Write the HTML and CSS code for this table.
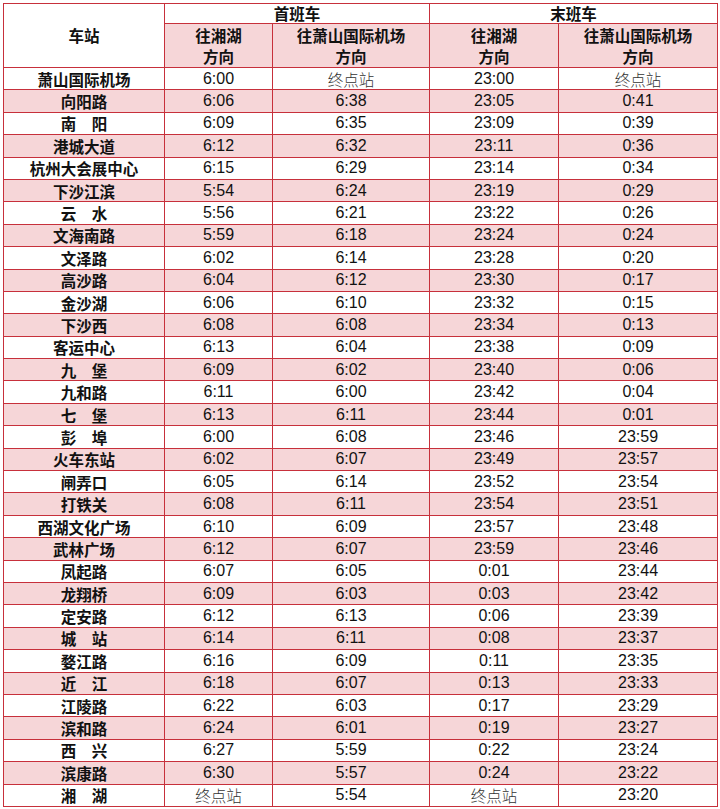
FILE: index.html
```html
<!DOCTYPE html>
<html lang="zh">
<head>
<meta charset="utf-8">
<link rel="stylesheet" href="styles.css">
</head>
<body>
<table class="tt">
<colgroup><col class="c1"><col class="c2"><col class="c3"><col class="c4"><col class="c5"></colgroup>
<thead>
<tr class="h1"><th rowspan="2" class="station-h">车站</th><th colspan="2">首班车</th><th colspan="2">末班车</th></tr>
<tr class="h2"><th>往湘湖<br>方向</th><th>往萧山国际机场<br>方向</th><th>往湘湖<br>方向</th><th>往萧山国际机场<br>方向</th></tr>
</thead>
<tbody>
<tr><th>萧山国际机场</th><td>6:00</td><td class="end">终点站</td><td>23:00</td><td class="end">终点站</td></tr>
<tr><th>向阳路</th><td>6:06</td><td>6:38</td><td>23:05</td><td>0:41</td></tr>
<tr><th>南　阳</th><td>6:09</td><td>6:35</td><td>23:09</td><td>0:39</td></tr>
<tr><th>港城大道</th><td>6:12</td><td>6:32</td><td>23:11</td><td>0:36</td></tr>
<tr><th>杭州大会展中心</th><td>6:15</td><td>6:29</td><td>23:14</td><td>0:34</td></tr>
<tr><th>下沙江滨</th><td>5:54</td><td>6:24</td><td>23:19</td><td>0:29</td></tr>
<tr><th>云　水</th><td>5:56</td><td>6:21</td><td>23:22</td><td>0:26</td></tr>
<tr><th>文海南路</th><td>5:59</td><td>6:18</td><td>23:24</td><td>0:24</td></tr>
<tr><th>文泽路</th><td>6:02</td><td>6:14</td><td>23:28</td><td>0:20</td></tr>
<tr><th>高沙路</th><td>6:04</td><td>6:12</td><td>23:30</td><td>0:17</td></tr>
<tr><th>金沙湖</th><td>6:06</td><td>6:10</td><td>23:32</td><td>0:15</td></tr>
<tr><th>下沙西</th><td>6:08</td><td>6:08</td><td>23:34</td><td>0:13</td></tr>
<tr><th>客运中心</th><td>6:13</td><td>6:04</td><td>23:38</td><td>0:09</td></tr>
<tr><th>九　堡</th><td>6:09</td><td>6:02</td><td>23:40</td><td>0:06</td></tr>
<tr><th>九和路</th><td>6:11</td><td>6:00</td><td>23:42</td><td>0:04</td></tr>
<tr><th>七　堡</th><td>6:13</td><td>6:11</td><td>23:44</td><td>0:01</td></tr>
<tr><th>彭　埠</th><td>6:00</td><td>6:08</td><td>23:46</td><td>23:59</td></tr>
<tr><th>火车东站</th><td>6:02</td><td>6:07</td><td>23:49</td><td>23:57</td></tr>
<tr><th>闸弄口</th><td>6:05</td><td>6:14</td><td>23:52</td><td>23:54</td></tr>
<tr><th>打铁关</th><td>6:08</td><td>6:11</td><td>23:54</td><td>23:51</td></tr>
<tr><th>西湖文化广场</th><td>6:10</td><td>6:09</td><td>23:57</td><td>23:48</td></tr>
<tr><th>武林广场</th><td>6:12</td><td>6:07</td><td>23:59</td><td>23:46</td></tr>
<tr><th>凤起路</th><td>6:07</td><td>6:05</td><td>0:01</td><td>23:44</td></tr>
<tr><th>龙翔桥</th><td>6:09</td><td>6:03</td><td>0:03</td><td>23:42</td></tr>
<tr><th>定安路</th><td>6:12</td><td>6:13</td><td>0:06</td><td>23:39</td></tr>
<tr><th>城　站</th><td>6:14</td><td>6:11</td><td>0:08</td><td>23:37</td></tr>
<tr><th>婺江路</th><td>6:16</td><td>6:09</td><td>0:11</td><td>23:35</td></tr>
<tr><th>近　江</th><td>6:18</td><td>6:07</td><td>0:13</td><td>23:33</td></tr>
<tr><th>江陵路</th><td>6:22</td><td>6:03</td><td>0:17</td><td>23:29</td></tr>
<tr><th>滨和路</th><td>6:24</td><td>6:01</td><td>0:19</td><td>23:27</td></tr>
<tr><th>西　兴</th><td>6:27</td><td>5:59</td><td>0:22</td><td>23:24</td></tr>
<tr><th>滨康路</th><td>6:30</td><td>5:57</td><td>0:24</td><td>23:22</td></tr>
<tr><th>湘　湖</th><td class="end">终点站</td><td>5:54</td><td class="end">终点站</td><td>23:20</td></tr>
</tbody>
</table>
</body>
</html>
```
FILE: styles.css
```css
html, body {
  margin: 0;
  padding: 0;
  background: #ffffff;
}
body {
  padding: 3px 0 0 3px;
}
.tt {
  border-collapse: collapse;
  table-layout: fixed;
  width: 714px;
  font-family: "Liberation Sans", Arial, "Noto Sans CJK SC", sans-serif;
  color: #111;
}
.c1 { width: 161px; }
.c2 { width: 108px; }
.c3 { width: 157px; }
.c4 { width: 129px; }
.c5 { width: 159px; }
.tt th, .tt td {
  border: 1.5px solid #c7303b;
  padding: 0;
  text-align: center;
  vertical-align: middle;
  line-height: 20px;
}
.tt thead th {
  font-family: "Noto Sans CJK SC", sans-serif;
  font-weight: 700;
  font-size: 15.5px;
  background: #fff;
}
.tt .h1 th { height: 19px; line-height: 19px; }
.tt .h2 th { height: 43px; background: #f6d6d8; line-height: 21px; }
.tt .h1 th.station-h { background: #fff; }
.tt tbody tr { height: 22.4px; }
.tt tbody th {
  font-family: "Noto Sans CJK SC", sans-serif;
  font-weight: 700;
  font-size: 15.5px;
}
.tt tbody td {
  font-size: 16px;
}
.tt tbody tr:nth-child(even) th,
.tt tbody tr:nth-child(even) td {
  background: #f6d6d8;
}
.tt td.end {
  font-family: "Noto Sans CJK SC", sans-serif;
  font-weight: 300;
  font-size: 15.5px;
  color: #333;
}
```
